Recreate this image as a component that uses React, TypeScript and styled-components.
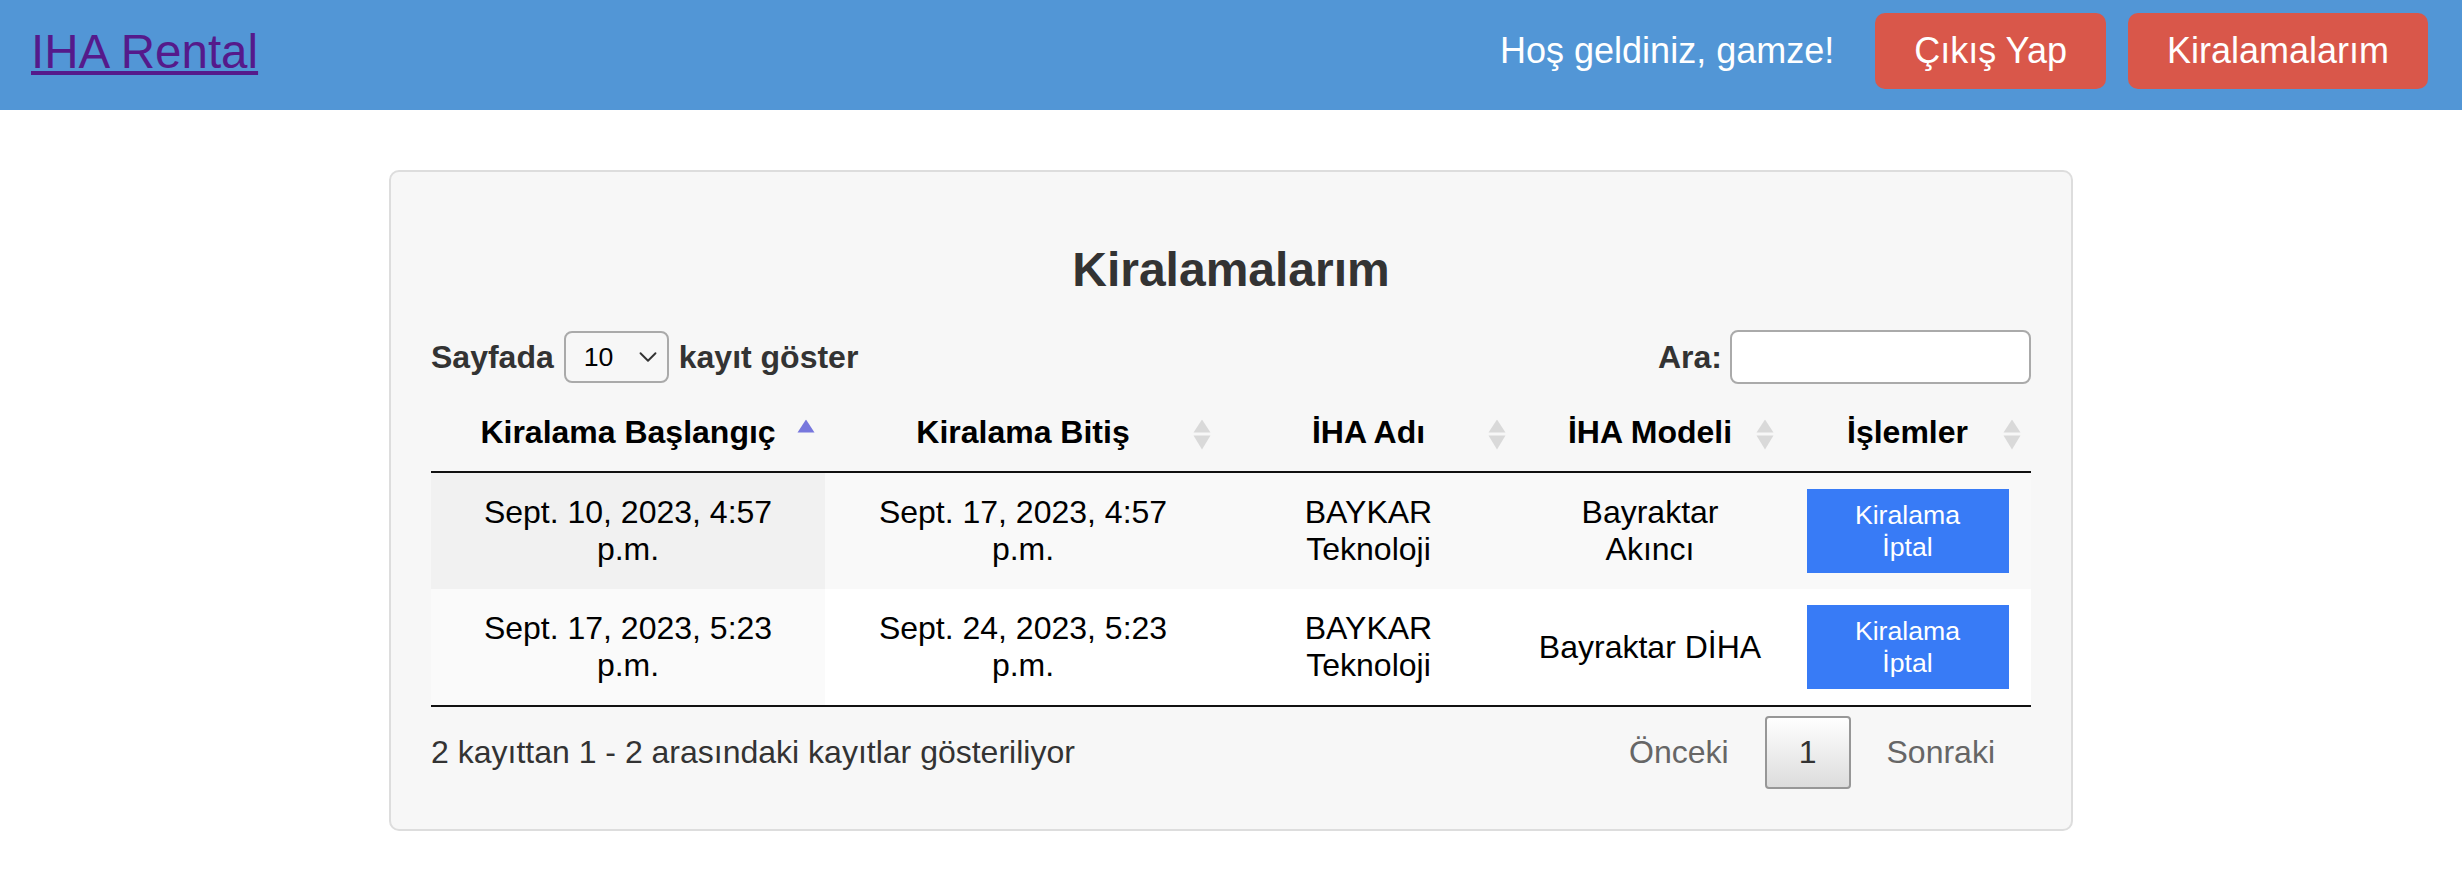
import styled, { createGlobalStyle } from "styled-components";
import { ChevronDown } from "lucide-react";

const rows = [
  {
    start: "Sept. 10, 2023, 4:57 p.m.",
    end: "Sept. 17, 2023, 4:57 p.m.",
    name: "BAYKAR Teknoloji",
    model: "Bayraktar Akıncı",
  },
  {
    start: "Sept. 17, 2023, 5:23 p.m.",
    end: "Sept. 24, 2023, 5:23 p.m.",
    name: "BAYKAR Teknoloji",
    model: "Bayraktar DİHA",
  },
];

const columns = [
  { title: "Kiralama Başlangıç", width: 394, active: true },
  { title: "Kiralama Bitiş", width: 396 },
  { title: "İHA Adı", width: 295 },
  { title: "İHA Modeli", width: 268 },
  { title: "İşlemler", width: 247 },
];

const SortIcon = ({ active }: { active?: boolean }) => (
  <Arrows>
    <svg width="18" height="31" viewBox="0 0 18 31">
      <polygon points="9,0 17.5,13 0.5,13" fill={active ? "#7777dd" : "#d9d9d9"} />
      {!active && <polygon points="0.5,16 17.5,16 9,30" fill="#d9d9d9" />}
    </svg>
  </Arrows>
);

const App = () => {
  return (
    <>
      <GlobalStyle />
      <Header>
        <Logo href="#">IHA Rental</Logo>
        <Holder>
          <Welcome>Hoş geldiniz, gamze!</Welcome>
          <NavButton>Çıkış Yap</NavButton>
          <NavButton>Kiralamalarım</NavButton>
        </Holder>
      </Header>

      <Card>
        <Title>Kiralamalarım</Title>

        <Controls>
          <Label>
            Sayfada
            <SelectWrap>
              <Select defaultValue="10">
                <option value="10">10</option>
                <option value="25">25</option>
                <option value="50">50</option>
              </Select>
              <Chevron size={30} strokeWidth={1.5} />
            </SelectWrap>
            kayıt göster
          </Label>
          <Label>
            Ara:
            <Search />
          </Label>
        </Controls>

        <Table>
          <colgroup>
            {columns.map((c) => (
              <col key={c.title} style={{ width: c.width }} />
            ))}
          </colgroup>
          <thead>
            <tr>
              {columns.map((c) => (
                <Th key={c.title}>
                  {c.title}
                  <SortIcon active={c.active} />
                </Th>
              ))}
            </tr>
          </thead>
          <tbody>
            {rows.map((r, i) => (
              <Tr key={i} $odd={i % 2 === 0}>
                <Td>{r.start}</Td>
                <Td>{r.end}</Td>
                <Td>{r.name}</Td>
                <Td>{r.model}</Td>
                <Td>
                  <CancelButton>
                    Kiralama
                    <br />
                    İptal
                  </CancelButton>
                </Td>
              </Tr>
            ))}
          </tbody>
        </Table>

        <Footer>
          <Info>2 kayıttan 1 - 2 arasındaki kayıtlar gösteriliyor</Info>
          <Pages>
            <PageLink>Önceki</PageLink>
            <PageButton>1</PageButton>
            <PageLink>Sonraki</PageLink>
          </Pages>
        </Footer>
      </Card>
    </>
  );
};

export default App;

const GlobalStyle = createGlobalStyle`
  body {
    margin: 0;
    background: #fff;
    font-family: "Liberation Sans", Arial, Helvetica, sans-serif;
  }
`;

const Header = styled.header`
  height: 110px;
  box-sizing: border-box;
  padding: 0 34px 8px 31px;
  background-color: #5296d6;
  display: flex;
  align-items: center;
  justify-content: space-between;
`;

const Logo = styled.a`
  font-size: 47.5px;
  color: #551a8b;
  text-decoration: underline;
`;

const Holder = styled.div`
  display: flex;
  align-items: center;
  gap: 22px;
`;

const Welcome = styled.span`
  font-size: 36px;
  color: #fff;
  margin-right: 19px;
`;

const NavButton = styled.button`
  height: 76px;
  padding: 0 39px;
  border: 0;
  border-radius: 10px;
  background-color: #d9574a;
  color: #fff;
  font-family: inherit;
  font-size: 36px;
`;

const Card = styled.div`
  width: 1684px;
  box-sizing: border-box;
  margin: 60px auto;
  padding: 40px;
  background-color: #f7f7f7;
  border: 2px solid #ddd;
  border-radius: 10px;
`;

const Title = styled.h2`
  margin: 30px 0 33px;
  text-align: center;
  font-size: 48px;
  font-weight: bold;
  color: #333;
`;

const Controls = styled.div`
  display: flex;
  justify-content: space-between;
  align-items: center;
  margin-bottom: 10px;
`;

const Label = styled.label`
  display: flex;
  align-items: center;
  gap: 10px;
  font-size: 32px;
  font-weight: bold;
  color: #333;
`;

const SelectWrap = styled.span`
  position: relative;
  display: inline-flex;
`;

const Select = styled.select`
  appearance: none;
  width: 105px;
  height: 52px;
  padding: 0 0 0 18px;
  border: 2px solid #aaa;
  border-radius: 8px;
  background: #f7f7f7;
  font-family: inherit;
  font-size: 26.67px;
  color: #000;
`;

const Chevron = styled(ChevronDown)`
  position: absolute;
  right: 6px;
  top: 11px;
  color: #333;
  pointer-events: none;
`;

const Search = styled.input`
  width: 301px;
  height: 54px;
  box-sizing: border-box;
  margin-left: -2px;
  border: 2px solid #aaa;
  border-radius: 8px;
  background: #fff;
`;

const Table = styled.table`
  width: 1600px;
  table-layout: fixed;
  border-collapse: collapse;
  border-bottom: 2px solid #111;
`;

const Th = styled.th`
  position: relative;
  padding: 20px;
  font-size: 32px;
  font-weight: bold;
  color: #000;
  text-align: center;
  border-bottom: 2px solid #111;
`;

const Arrows = styled.span`
  position: absolute;
  right: 10px;
  top: 50%;
  margin-top: 2px;
  transform: translateY(-50%);
  display: flex;
`;

const Tr = styled.tr<{ $odd?: boolean }>`
  background-color: ${(p) => (p.$odd ? "#f9f9f9" : "#fff")};

  & + & td {
    border-top: 2px solid #ddd;
  }

  & td:first-child {
    background-color: ${(p) => (p.$odd ? "#f1f1f1" : "#fafafa")};
  }
`;

const Td = styled.td`
  padding: 16px 20px;
  font-size: 32px;
  color: #000;
  text-align: center;
  vertical-align: middle;
`;

const CancelButton = styled.button`
  width: 202px;
  padding: 10px 20px;
  border: 0;
  background-color: #387bf6;
  color: #fff;
  font-family: inherit;
  font-size: 26.67px;
  line-height: 32px;
`;

const Footer = styled.div`
  display: flex;
  justify-content: space-between;
  align-items: center;
  margin-top: 9px;
`;

const Info = styled.div`
  font-size: 32px;
  color: #333;
`;

const Pages = styled.div`
  display: flex;
  align-items: center;
  gap: 4px;
  margin-right: 4px;
`;

const PageLink = styled.span`
  padding: 16px 32px;
  font-size: 32px;
  color: #666;
`;

const PageButton = styled.button`
  padding: 16px 32px;
  border: 2px solid #979797;
  border-radius: 4px;
  background: linear-gradient(to bottom, #fff 0%, #dcdcdc 100%);
  font-family: inherit;
  font-size: 32px;
  color: #333;
`;
